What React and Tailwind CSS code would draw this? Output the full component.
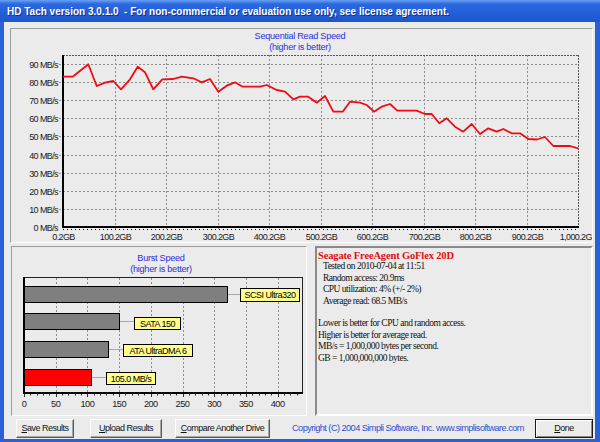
import React from 'react';

const SANS = '"Liberation Sans", Arial, sans-serif';

// sequential read curve, in page pixels (x, y)
const readPts = [
  [63, 76.7], [72.7, 76.7], [88.3, 64.3], [96.7, 86], [105, 82.7], [113.3, 81], [121, 89.3],
  [130, 79.3], [137.7, 66.7], [145, 72.3], [153.3, 89.3], [162.3, 79.3], [173.3, 79], [181.7, 76.7],
  [193.3, 78.3], [201.7, 82.3], [210, 79], [218.3, 91.7], [226.7, 85.7], [235, 82.3], [242.7, 86.7],
  [260, 86.7], [266.7, 85], [276.7, 90], [285, 91.7], [293.3, 99.3], [300, 96.7], [308.3, 96.7],
  [316.7, 102.7], [325, 96], [333.3, 111.7], [342.7, 111.7], [350, 101.7], [360, 102.7], [366.7, 105],
  [374, 111.7], [381.7, 106.7], [390, 104], [397.3, 110.7], [416.7, 110.7], [425, 114], [431.7, 114],
  [439.3, 123.3], [446.7, 118.3], [455, 126.7], [463.3, 131.7], [471.7, 124], [480, 134], [488.3, 128.3],
  [496.7, 131.7], [503.3, 129], [511.7, 133.3], [520, 133.3], [528.3, 139], [536.7, 139.5], [545, 137],
  [553.3, 146], [570, 146], [578, 148.3],
];

const xLabels = ['0.2GB', '100.2GB', '200.2GB', '300.2GB', '400.2GB', '500.2GB', '600.2GB', '700.2GB', '800.2GB', '900.2GB', '1,000.2GB'];

const SeqChart = () => {
  const yOf = (v) => Math.round(227 - v * 1.811) + 0.5;
  const xOf = (i) => Math.round(63 + i * 51.5) + 0.5;
  const ys = [0, 10, 20, 30, 40, 50, 60, 70, 80, 90];
  return (
    <svg width="581" height="213" viewBox="11 29 581 213" className="block" style={{ fontFamily: SANS }}>
      <text x="300" y="38.5" textAnchor="middle" fontSize="9.2" letterSpacing="-0.3" fill="#3030dc">Sequential Read Speed</text>
      <text x="300" y="50" textAnchor="middle" fontSize="9.2" letterSpacing="-0.3" fill="#3030dc">(higher is better)</text>

      {/* grid */}
      {ys.slice(1).map((v) => (
        <line key={v} x1="59" x2="578" y1={yOf(v)} y2={yOf(v)} stroke="#8c8c8c" strokeDasharray="2 2" />
      ))}
      {xLabels.slice(1, 10).map((_, i) => (
        <line key={i} x1={xOf(i + 1)} x2={xOf(i + 1)} y1="55" y2="231" stroke="#8c8c8c" strokeDasharray="2 2" />
      ))}
      <line x1="63" x2="578.5" y1="55.5" y2="55.5" stroke="#555" strokeDasharray="2 1" />
      <line x1="578.5" x2="578.5" y1="55" y2="227" stroke="#555" strokeDasharray="2 1" />

      {/* axes */}
      <line x1="63" x2="63" y1="55" y2="228" stroke="#000" strokeWidth="2" />
      <line x1="62" x2="579" y1="227" y2="227" stroke="#000" strokeWidth="2" />
      <line x1="63" x2="579" y1="229.5" y2="229.5" stroke="#000" strokeDasharray="1 3" />

      {ys.map((v) => (
        <text key={v} x="58" y={yOf(v) + 3} textAnchor="end" fontSize="9" letterSpacing="-0.6" fill="#1a1a1a">
          {v} MB/s
        </text>
      ))}
      {xLabels.map((l, i) => (
        <text key={l} x={xOf(i)} y="239.5" textAnchor="middle" fontSize="9" letterSpacing="-0.6" fill="#1a1a1a">
          {l}
        </text>
      ))}

      <polyline
        points={readPts.map((p) => p.join(',')).join(' ')}
        fill="none"
        stroke="#f00a14"
        strokeWidth="1.8"
        strokeLinejoin="round"
      />
    </svg>
  );
};

const bars = [
  { v: 320, y: 286, label: 'SCSI Ultra320', box: [240, 288, 59, 13], fill: '#7f7f7f' },
  { v: 150, y: 313, label: 'SATA 150', box: [134, 317, 46, 12], fill: '#7f7f7f' },
  { v: 133, y: 341, label: 'ATA UltraDMA 6', box: [123, 344, 69, 12], fill: '#7f7f7f' },
  { v: 105, y: 369, label: '105.0 MB/s', box: [106, 372, 49, 12], fill: '#ff0000' },
];

const BurstChart = () => {
  const xOf = (v) => 24 + v * 0.634;
  const ticks = [0, 50, 100, 150, 200, 250, 300, 350, 400];
  return (
    <svg width="294" height="168" viewBox="12 247 294 168" className="block" style={{ fontFamily: SANS }}>
      <text x="161" y="260.5" textAnchor="middle" fontSize="9.2" letterSpacing="-0.3" fill="#3030dc">Burst Speed</text>
      <text x="161" y="271.5" textAnchor="middle" fontSize="9.2" letterSpacing="-0.3" fill="#3030dc">(higher is better)</text>

      {ticks.slice(1).map((v) => (
        <line key={v} x1={Math.round(xOf(v)) + 0.5} x2={Math.round(xOf(v)) + 0.5} y1="278" y2="392" stroke="#8c8c8c" strokeDasharray="2 2" />
      ))}
      <rect x="24.5" y="277.5" width="278" height="116" fill="none" stroke="#222" />
      <line x1="24" x2="24" y1="277" y2="394" stroke="#000" strokeWidth="2" />
      <line x1="23" x2="303" y1="393" y2="393" stroke="#000" strokeWidth="2" />
      {Array.from({ length: 44 }, (_, i) => (
        <line key={i} x1={Math.round(xOf(i * 10)) + 0.5} x2={Math.round(xOf(i * 10)) + 0.5} y1="394" y2={i % 5 === 0 ? 397 : 395.5} stroke="#333" />
      ))}

      {bars.map((b) => {
        const [bx, by, bw, bh] = b.box;
        const end = Math.round(xOf(b.v));
        return (
          <g key={b.label}>
            <line x1={end} x2={bx} y1={b.y + 8.5} y2={b.y + 8.5} stroke="#a8a8a8" />
            <rect x="24.5" y={b.y + 0.5} width={end - 24} height="16" fill={b.fill} stroke="#000" />
            <rect x={bx + 0.5} y={by + 0.5} width={bw} height={bh} fill="#ffff8c" stroke="#000" />
            <text x={bx + bw / 2 + 0.5} y={by + bh / 2 + 3.8} textAnchor="middle" fontSize="9" letterSpacing="-0.5" fill="#000">
              {b.label}
            </text>
          </g>
        );
      })}

      {ticks.map((v) => (
        <text key={v} x={xOf(v)} y="406.5" textAnchor="middle" fontSize="9.2" letterSpacing="-0.5" fill="#1a1a1a">
          {v}
        </text>
      ))}
    </svg>
  );
};

const Btn = ({ u, rest, w, isDefault }) => (
  <button
    className={`h-[19px] ${w} flex items-center justify-center text-[9px] tracking-[-0.5px] text-[#111] bg-[#ececec] ${
      isDefault
        ? 'border border-[#1a1a1a] shadow-[inset_1px_1px_0_#fff,inset_-1px_-1px_0_#8a8a8a]'
        : 'border border-t-white border-l-white border-b-[#5a5a5a] border-r-[#5a5a5a] shadow-[inset_-1px_-1px_0_#a8a8a8]'
    }`}
    style={{ fontFamily: SANS }}
  >
    <span className="underline underline-offset-1">{u}</span>
    {rest}
  </button>
);

const App = () => {
  const serif = { fontFamily: '"Liberation Serif", "Times New Roman", serif' };
  return (
    <div className="w-[600px] h-[442px] flex flex-col overflow-hidden bg-[#2a60d8]">
      {/* title bar */}
      <div
        className="h-[22px] shrink-0 flex items-center pl-[7px] bg-[linear-gradient(180deg,#6aa2f6_0%,#2c69e0_18%,#2460da_55%,#1d55cc_100%)]"
        style={{ fontFamily: SANS }}
      >
        <span className="text-white font-bold text-[10px] tracking-[0px] [text-shadow:1px_1px_0_#0b2f8a] whitespace-pre">
          HD Tach version 3.0.1.0  - For non-commercial or evaluation use only, see license agreement.
        </span>
      </div>

      {/* window body */}
      <div className="flex-1 ml-[4px] mr-[5px] mb-[3px] bg-[#ebebeb] flex flex-col pt-[6px] pl-[6px] pr-[2px]">
        <div className="h-[215px] shrink-0 border border-t-[#9c9c9c] border-l-[#9c9c9c] border-b-white border-r-white overflow-hidden">
          <SeqChart />
        </div>

        <div className="h-[170px] shrink-0 mt-[3px] flex gap-[8px] pl-[1px]">
          <div className="w-[296px] border border-t-[#9c9c9c] border-l-[#9c9c9c] border-b-white border-r-white overflow-hidden">
            <BurstChart />
          </div>
          <div
            className="flex-1 border-2 border-t-[#8a8a8a] border-l-[#8a8a8a] border-b-white border-r-white pt-[2px] pl-[1px] text-[9.5px] leading-[11.4px] tracking-[-0.5px] text-[#111]"
            style={serif}
          >
            <div className="font-bold text-[#e01010] text-[10.5px] tracking-[-0.15px]">Seagate FreeAgent GoFlex 20D</div>
            <div className="pl-[5px]">Tested on 2010-07-04 at 11:51</div>
            <div className="pl-[5px]">Random access: 20.9ms</div>
            <div className="pl-[5px]">CPU utilization: 4% (+/- 2%)</div>
            <div className="pl-[5px]">Average read: 68.5 MB/s</div>
            <div className="h-[11.4px]" />
            <div>Lower is better for CPU and random access.</div>
            <div>Higher is better for average read.</div>
            <div>MB/s = 1,000,000 bytes per second.</div>
            <div>GB = 1,000,000,000 bytes.</div>
          </div>
        </div>

        <div className="mt-[3px] h-[19px] flex items-center pl-[6px]">
          <Btn u="S" rest="ave Results" w="w-[58px]" />
          <div className="ml-[16px]">
            <Btn u="U" rest="pload Results" w="w-[72px]" />
          </div>
          <div className="ml-[13px]">
            <Btn u="C" rest="ompare Another Drive" w="w-[95px]" />
          </div>
          <span className="ml-[22px] text-[9.2px] tracking-[-0.55px] text-[#2d4fd0] whitespace-nowrap" style={{ fontFamily: SANS }}>
            Copyright (C) 2004 Simpli Software, Inc. www.simplisoftware.com
          </span>
          <div className="ml-auto">
            <Btn u="D" rest="one" w="w-[58px]" isDefault />
          </div>
        </div>
      </div>
    </div>
  );
};

export default App;
